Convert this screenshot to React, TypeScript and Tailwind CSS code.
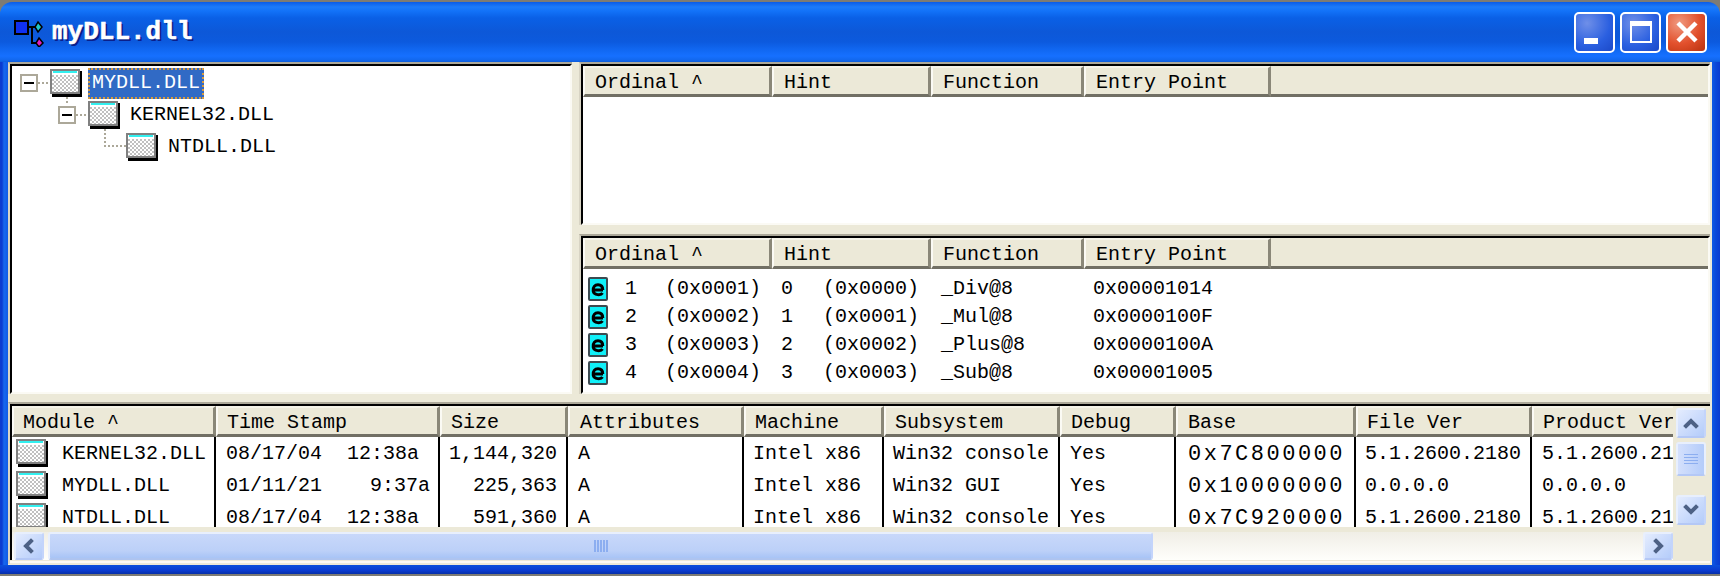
import React from "react";

type Col = { w: number; title: string; pl: number; last?: boolean };

const WinIcon = () => (
  <svg width="32" height="28" viewBox="0 0 32 28" className="shrink-0">
    <defs>
      <pattern id="chk" width="4" height="4" patternUnits="userSpaceOnUse">
        <rect width="4" height="4" fill="#ffffff" />
        <rect width="2" height="2" fill="#c0c0c0" />
        <rect x="2" y="2" width="2" height="2" fill="#c0c0c0" />
      </pattern>
    </defs>
    <rect x="2" y="2" width="30" height="26" fill="#000" />
    <rect x="0" y="0" width="30" height="25" fill="#808080" />
    <rect x="2" y="2" width="26" height="21" fill="url(#chk)" />
    <rect x="2" y="2" width="26" height="4" fill="#ffffff" />
    <rect x="3" y="2" width="24" height="2" fill="#33f0f0" />
  </svg>
);

const EIcon = () => (
  <svg width="20" height="24" viewBox="0 0 20 24" className="shrink-0">
    <rect x="0" y="0" width="20" height="24" rx="2" fill="#3c4a50" />
    <rect x="2" y="2" width="16" height="20" fill="#10f0f8" />
    <path d="M5 13h10M14.500 16c-1.500 2.500-8.500 2.500-9.300-2-.6-4 1.800-6.300 4.800-6.300s4.800 2 4.800 5.300" fill="none" stroke="#000" strokeWidth="3" />
  </svg>
);

const TreeBox = () => (
  <span className="flex h-[18px] w-[18px] shrink-0 items-center justify-center border-2 border-[#aca899] bg-white">
    <span className="h-[2px] w-[10px] bg-black" />
  </span>
);

const HDot = ({ w }: { w: number }) => (
  <svg width={w} height="2" className="shrink-0">
    <line x1="0" y1="1" x2={w} y2="1" stroke="#aca899" strokeWidth="2" strokeDasharray="2 2" />
  </svg>
);

const HeaderCell = ({ c }: { c: Col }) => (
  <div
    className={
      c.last
        ? "h-[31px] shrink-0 overflow-hidden whitespace-pre border-t-2 border-b-[3px] border-l-2 border-t-[#f5f3e8] border-l-[#fbfaf4] border-b-[#716f64] bg-[#ece9d8] text-[20px] leading-[30px]"
        : "h-[31px] shrink-0 overflow-hidden whitespace-pre border-t-2 border-b-[3px] border-l-2 border-r-[3px] border-t-[#f5f3e8] border-l-[#fbfaf4] border-r-[#8a8778] border-b-[#716f64] bg-[#ece9d8] text-[20px] leading-[30px]"
    }
    style={{ width: c.w, paddingLeft: c.pl - 2 }}
  >
    {c.title}
  </div>
);

const Header = ({ cols, fill }: { cols: Col[]; fill?: boolean }) => (
  <div className="flex h-[31px] shrink-0 overflow-hidden">
    {cols.map((c) => (
      <HeaderCell key={c.title} c={c} />
    ))}
    {fill && <div className="flex-1 border-b-[3px] border-[#716f64] bg-[#ece9d8]" />}
  </div>
);

const upperCols: Col[] = [
  { w: 189, title: "Ordinal ^", pl: 12 },
  { w: 159, title: "Hint", pl: 12 },
  { w: 153, title: "Function", pl: 12 },
  { w: 187, title: "Entry Point", pl: 12 },
];

const exportsRows = [
  ["1", "(0x0001)", "0", "(0x0000)", "_Div@8", "0x00001014"],
  ["2", "(0x0002)", "1", "(0x0001)", "_Mul@8", "0x0000100F"],
  ["3", "(0x0003)", "2", "(0x0002)", "_Plus@8", "0x0000100A"],
  ["4", "(0x0004)", "3", "(0x0003)", "_Sub@8", "0x00001005"],
];

const modules = [
  { name: "KERNEL32.DLL", date: "08/17/04", time: "12:38a", tw: "w-[121px]", size: "1,144,320", sub: "Win32 console", base: "0x7C800000", fv: "5.1.2600.2180", pv: "5.1.2600.2180" },
  { name: "MYDLL.DLL", date: "01/11/21", time: "9:37a", tw: "w-[144px]", size: "225,363", sub: "Win32 GUI", base: "0x10000000", fv: "0.0.0.0", pv: "0.0.0.0" },
  { name: "NTDLL.DLL", date: "08/17/04", time: "12:38a", tw: "w-[121px]", size: "591,360", sub: "Win32 console", base: "0x7C920000", fv: "5.1.2600.2180", pv: "5.1.2600.2180" },
];

const ScrollBtn = ({ d, cls }: { d: string; cls: string }) => (
  <div className={`flex shrink-0 items-center justify-center rounded-[3px] border-2 border-[#e8effd] border-b-[#b4c8f6] border-r-[#c3d4fb] bg-[linear-gradient(135deg,#e4ecfe,#b4ccfa)] ${cls}`}>
    <svg width="16" height="16" viewBox="0 0 16 16">
      <path d={d} fill="none" stroke="#4d6185" strokeWidth="4" strokeLinecap="square" strokeLinejoin="miter" />
    </svg>
  </div>
);

const Cols = () => {
  const cols: { w: number; title: string; pl: number; cells: React.ReactNode[] }[] = [
    { w: 204, title: "Module ^", pl: 11, cells: modules.map((m) => (
      <div key={m.name} className="flex h-[32px] items-center pl-[4px]"><WinIcon /><span className="ml-[14px] mt-[1px] whitespace-pre">{m.name}</span></div>
    )) },
    { w: 224, title: "Time Stamp", pl: 11, cells: modules.map((m) => (
      <div key={m.name} className="flex h-[32px] items-center whitespace-pre pl-[10px] pt-[1px]"><span className={`${m.tw} shrink-0`}>{m.date}</span><span>{m.time}</span></div>
    )) },
    { w: 128, title: "Size", pl: 11, cells: modules.map((m) => (
      <div key={m.name} className="h-[32px] whitespace-pre pr-[9px] text-right leading-[33px]">{m.size}</div>
    )) },
    { w: 176, title: "Attributes", pl: 12, cells: modules.map((m) => (
      <div key={m.name} className="h-[32px] pl-[10px] leading-[33px]">A</div>
    )) },
    { w: 140, title: "Machine", pl: 11, cells: modules.map((m) => (
      <div key={m.name} className="h-[32px] pl-[9px] leading-[33px]">Intel x86</div>
    )) },
    { w: 176, title: "Subsystem", pl: 11, cells: modules.map((m) => (
      <div key={m.name} className="h-[32px] whitespace-pre pl-[9px] leading-[33px]">{m.sub}</div>
    )) },
    { w: 116, title: "Debug", pl: 11, cells: modules.map((m) => (
      <div key={m.name} className="h-[32px] pl-[10px] leading-[33px]">Yes</div>
    )) },
    { w: 180, title: "Base", pl: 12, cells: modules.map((m) => (
      <div key={m.name} className="h-[32px] whitespace-pre pl-[12px] text-[22px] leading-[35px] tracking-[2.500px]">{m.base}</div>
    )) },
    { w: 176, title: "File Ver", pl: 11, cells: modules.map((m) => (
      <div key={m.name} className="h-[32px] whitespace-pre pl-[9px] leading-[33px]">{m.fv}</div>
    )) },
    { w: 141, title: "Product Ver", pl: 11, cells: modules.map((m) => (
      <div key={m.name} className="h-[32px] overflow-hidden whitespace-pre pl-[10px] leading-[33px]">{m.pv}</div>
    )) },
  ];
  return (
    <div className="flex h-[121px] w-[1661px] shrink-0 overflow-hidden text-[20px]">
      {cols.map((c, i) => (
        <div key={c.title} className="shrink-0" style={{ width: c.w }}>
          <HeaderCell c={{ w: c.w, title: c.title, pl: c.pl, last: i === cols.length - 1 }} />
          <div className={i === cols.length - 1 ? "h-[90px] overflow-hidden bg-white" : "h-[90px] overflow-hidden border-r-2 border-black bg-white"}>
            {c.cells}
          </div>
        </div>
      ))}
    </div>
  );
};

const Pane = ({ children, className }: { children: React.ReactNode; className: string }) => (
  <div className={`border-t-2 border-l-2 border-t-[#aca899] border-l-[#d8d4c4] ${className}`}>
    <div className="flex h-full w-full flex-col overflow-hidden border-t-2 border-l-2 border-b-2 border-r-2 border-t-black border-l-black border-b-[#fbfaf4] border-r-[#fbfaf4]">
      {children}
    </div>
  </div>
);

export default function App() {
  return (
    <div className="flex h-[576px] w-[1720px] flex-col overflow-hidden bg-[#7d7b74] font-['Liberation_Mono',monospace] text-black">
      {/* Title bar */}
      <div className="mt-[2px] flex h-[60px] shrink-0 items-center rounded-t-[12px] bg-[linear-gradient(180deg,#0a5ce8_0px,#1c7bfa_5px,#1272f8_9px,#0a60e6_16px,#0d58d8_30px,#0c5ade_40px,#1168f2_48px,#1670ff_54px,#1268ee_58px,#0c5cdc_60px)] pl-[14px] pr-[13px]">
        <svg width="32" height="28" viewBox="0 0 32 28" className="mt-[2px] shrink-0">
          <rect x="1" y="2" width="13" height="13" fill="#1030f0" stroke="#000" strokeWidth="2" />
          <path d="M14 8h10M18 8v16h7" fill="none" stroke="#000" strokeWidth="2" />
          <path d="M24 3l4 5-4 5-3-5z" fill="#20c8c8" stroke="#000" strokeWidth="1.500" />
          <path d="M25 19l4 5-4 4-3-4z" fill="#e020c0" stroke="#000" strokeWidth="1.500" />
        </svg>
        <span className="ml-[6px] whitespace-pre text-[26px] font-bold leading-none text-white [-webkit-text-stroke:0.6px_white] [text-shadow:2px_2px_0_#0a1f8a]">myDLL.dll</span>
        <div className="ml-auto flex items-center gap-[5px]">
          <div className="flex h-[41px] w-[41px] items-end rounded-[5px] border-2 border-white bg-[radial-gradient(circle_at_30%_25%,#6f8fe8,#2a5fe0_60%,#1b49c8)] pb-[7px] pl-[8px]">
            <span className="h-[6px] w-[14px] bg-white" />
          </div>
          <div className="flex h-[41px] w-[41px] items-center justify-center rounded-[5px] border-2 border-white bg-[radial-gradient(circle_at_30%_25%,#6f8fe8,#2a5fe0_60%,#1b49c8)]">
            <span className="h-[22px] w-[22px] border-2 border-t-[5px] border-white" />
          </div>
          <div className="flex h-[41px] w-[41px] items-center justify-center rounded-[5px] border-2 border-white bg-[radial-gradient(circle_at_30%_25%,#f09a80,#e2502c_55%,#b8320f)]">
            <svg width="22" height="22" viewBox="0 0 22 22">
              <path d="M2 2l18 18M20 2L2 20" stroke="#fff" strokeWidth="4.500" />
            </svg>
          </div>
        </div>
      </div>

      {/* Window body */}
      <div className="flex h-[503px] shrink-0">
        <div className="w-[8px] shrink-0 bg-[linear-gradient(90deg,#0a3bd0,#0a3bd0_2px,#1668ee_4px,#0f5ae6)]" />
        <div className="flex w-[1704px] shrink-0 flex-col bg-[#ece9d8]">
          <div className="flex h-[332px] shrink-0">
            <Pane className="h-[332px] w-[564px] shrink-0">
              <div className="h-full bg-white pt-[1px] text-[20px]">
                <div className="flex h-[32px] items-center pl-[8px]">
                  <TreeBox /><HDot w={12} /><WinIcon />
                  <span className="ml-[6px] flex h-[31px] items-center border-2 border-dotted border-[#d89a3c] bg-[#316ac5] px-[2px] text-white">MYDLL.DLL</span>
                </div>
                <div className="relative flex h-[32px] items-center pl-[46px]">
                  <svg width="2" height="8" className="absolute left-[54px] top-[-2px]"><line x1="1" y1="0" x2="1" y2="8" stroke="#aca899" strokeWidth="2" strokeDasharray="2 2" /></svg>
                  <TreeBox /><HDot w={12} /><WinIcon />
                  <span className="ml-[10px] whitespace-pre">KERNEL32.DLL</span>
                </div>
                <div className="relative flex h-[32px] items-center pl-[84px]">
                  <svg width="24" height="18" className="absolute left-[92px] top-[-2px]"><path d="M1 0v17h22" fill="none" stroke="#aca899" strokeWidth="2" strokeDasharray="2 2" /></svg>
                  <span className="ml-[30px]"><WinIcon /></span>
                  <span className="ml-[10px] whitespace-pre">NTDLL.DLL</span>
                </div>
              </div>
            </Pane>
            <div className="w-[7px] shrink-0" />
            <div className="flex w-[1131px] shrink-0 flex-col">
              <Pane className="h-[163px] shrink-0">
                <Header cols={upperCols} fill />
                <div className="flex-1 bg-white" />
              </Pane>
              <div className="h-[9px] shrink-0" />
              <Pane className="h-[160px] shrink-0">
                <Header cols={upperCols} fill />
                <div className="flex-1 bg-white pt-[6px] text-[20px]">
                  {exportsRows.map((r) => (
                    <div key={r[0]} className="flex h-[28px] items-center whitespace-pre leading-[28px]">
                      <span className="ml-[5px] flex h-[28px] w-[37px] shrink-0 items-center"><EIcon /></span>
                      <span className="w-[40px] shrink-0">{r[0]}</span>
                      <span className="w-[116px] shrink-0">{r[1]}</span>
                      <span className="w-[42px] shrink-0">{r[2]}</span>
                      <span className="w-[118px] shrink-0">{r[3]}</span>
                      <span className="w-[152px] shrink-0">{r[4]}</span>
                      <span>{r[5]}</span>
                    </div>
                  ))}
                </div>
              </Pane>
            </div>
          </div>
          <div className="h-[8px] shrink-0" />
          {/* Bottom pane */}
          <div className="w-[1702px] border-t-2 border-l-2 border-t-[#aca899] border-l-[#d8d4c4]">
            <div className="border-t-2 border-l-2 border-t-black border-l-black">
              <div className="flex h-[121px]">
                <Cols />
                <div className="ml-[3px] flex h-[119px] w-[30px] shrink-0 flex-col pt-[2px]">
                  <ScrollBtn cls="h-[30px] w-[30px]" d="M3 11l5-5 5 5" />
                  <div className="mt-[4px] flex h-[34px] shrink-0 flex-col items-center justify-center gap-[2px] rounded-[3px] border-2 border-[#e8effd] border-b-[#b4c8f6] bg-[linear-gradient(90deg,#d4e0fc,#b4ccfa)]">
                    <span className="h-[1px] w-[14px] bg-[#8caef0]" /><span className="h-[1px] w-[14px] bg-[#8caef0]" /><span className="h-[1px] w-[14px] bg-[#8caef0]" /><span className="h-[1px] w-[14px] bg-[#8caef0]" />
                  </div>
                  <div className="flex-1" />
                  <ScrollBtn cls="h-[30px] w-[30px]" d="M3 5l5 5 5-5" />
                </div>
              </div>
              <div className="mt-[5px] flex h-[28px] w-[1661px] bg-[linear-gradient(180deg,#f0eee6,#fefefb)] pl-[2px]">
                <ScrollBtn cls="h-[28px] w-[30px]" d="M10 3L5 8l5 5" />
                <div className="ml-[4px] flex h-[28px] w-[1105px] shrink-0 items-center justify-center gap-[1px] rounded-[3px] border-2 border-[#e8effd] border-b-[#aec4f0] border-r-[#c3d4fb] bg-[linear-gradient(180deg,#c8d8fa,#bcd0f8_70%,#a8c4f6)]">
                  {[0, 1, 2, 3, 4].map((k) => <span key={k} className="h-[12px] w-[2px] bg-[#8caef0]" />)}
                </div>
                <div className="flex-1" />
                <ScrollBtn cls="h-[28px] w-[30px]" d="M6 3l5 5-5 5" />
              </div>
            </div>
            <div className="mt-[1px] h-[3px] border-t-2 border-[#fbfaf4]" />
          </div>
        </div>
        <div className="w-[8px] shrink-0 bg-[linear-gradient(90deg,#0f5ae6,#0a47d8_4px,#0a3bd0)]" />
      </div>

      {/* Bottom frame */}
      <div className="h-[9px] shrink-0 bg-[linear-gradient(180deg,#0a50dc,#0a3bd0_60%,#062fa8)]" />
    </div>
  );
}
